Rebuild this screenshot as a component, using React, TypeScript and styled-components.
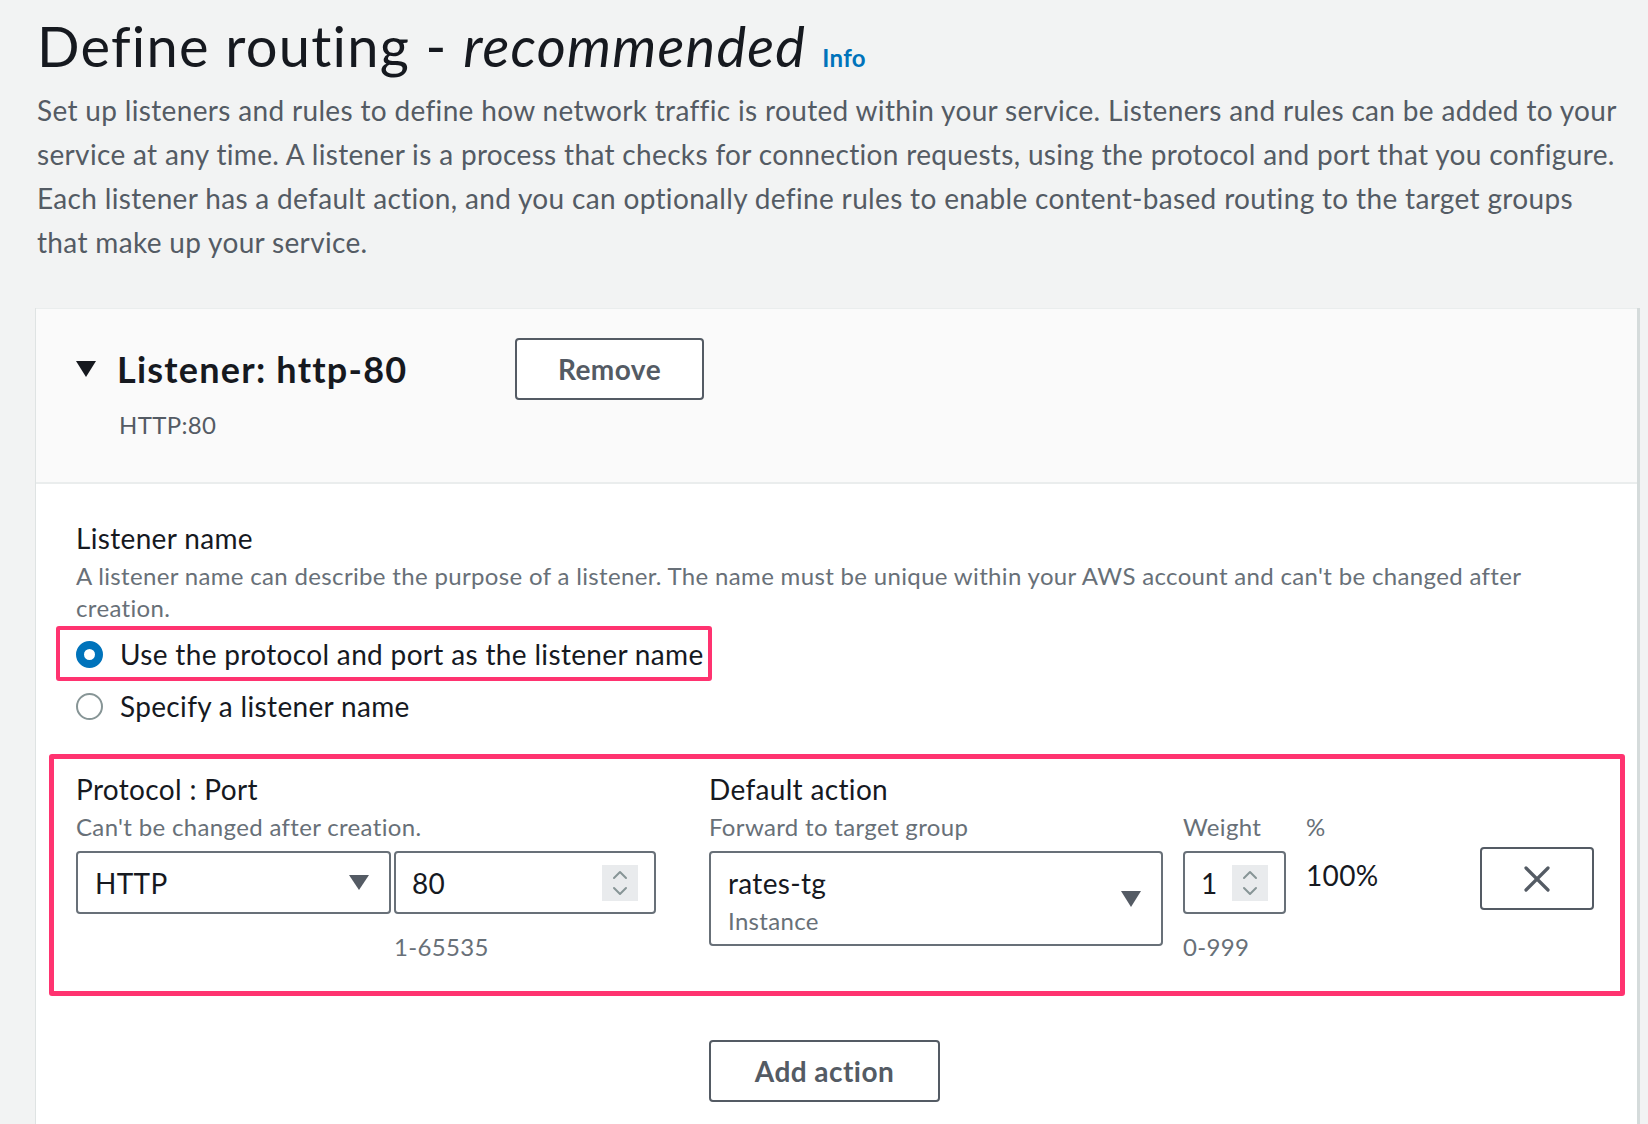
import React from "react";
import styled, { createGlobalStyle } from "styled-components";

const GlobalStyle = createGlobalStyle`
  html, body { margin: 0; padding: 0; }
  body {
    background: #f2f3f3;
    font-family: Lato, "Open Sans", "Liberation Sans", sans-serif;
    color: #16191f;
    letter-spacing: 0.021em;
    -webkit-font-smoothing: antialiased;
  }
  * { box-sizing: border-box; }
`;

const Page = styled.div`
  padding: 14px 11px 0 36px;
  width: 1648px;
  height: 1124px;
  overflow: hidden;
`;

const TitleRow = styled.div`
  display: flex;
  align-items: baseline;
  gap: 16px;
  padding-left: 1px;
`;

const H1 = styled.h1`
  margin: 0;
  font-size: 56px;
  line-height: 64px;
  font-weight: 400;
  letter-spacing: 0.022em;
  color: #16191f;
  em { font-style: italic; }
`;

const InfoLink = styled.a`
  font-size: 24px;
  font-weight: 700;
  color: #0073bb;
  text-decoration: none;
`;

const Intro = styled.p`
  margin: 10px 0 0 1px;
  font-size: 28px;
  line-height: 44px;
  color: #545b64;
  white-space: nowrap;
`;

const Card = styled.section`
  margin-top: 44px;
  background: #ffffff;
  border-top: 1px solid #eaeded;
  box-shadow: 3px 0 0 #d5dbdb, -1px 0 0 #dfe3e3;
  height: 900px;
`;

const CardHeader = styled.header`
  background: #fafafa;
  border-bottom: 2px solid #eaeded;
  padding: 29px 40px 41px;
`;

const HeaderRow = styled.div`
  display: flex;
  align-items: center;
`;

const TitleGroup = styled.div`
  width: 439px;
  display: flex;
  align-items: center;
  gap: 21px;
`;

const Caret = styled.span<{ $size: number }>`
  display: inline-block;
  width: 0;
  height: 0;
  border-left: ${(p) => p.$size / 2}px solid transparent;
  border-right: ${(p) => p.$size / 2}px solid transparent;
  border-top: ${(p) => Math.round(p.$size * 0.75)}px solid currentColor;
`;

const Toggle = styled.span`
  color: #16191f;
  display: flex;
`;

const H2 = styled.h2`
  margin: 0;
  font-size: 36px;
  line-height: 44px;
  font-weight: 700;
  letter-spacing: 0.034em;
  color: #16191f;
`;

const Button = styled.button<{ $w: number }>`
  width: ${(p) => p.$w}px;
  height: 62px;
  background: #ffffff;
  border: 2px solid #545b64;
  border-radius: 4px;
  font-family: inherit;
  font-size: 28px;
  font-weight: 700;
  letter-spacing: 0.016em;
  color: #545b64;
  display: flex;
  align-items: center;
  justify-content: center;
  padding: 0;
`;

const SubText = styled.div`
  margin-top: 9px;
  padding-left: 43px;
  font-size: 24px;
  line-height: 32px;
  color: #545b64;
`;

const CardBody = styled.div`
  padding: 32px 40px 0;
`;

const Label = styled.div`
  font-size: 28px;
  line-height: 44px;
  color: #16191f;
`;

const Desc = styled.div`
  font-size: 24px;
  line-height: 32px;
  color: #687078;
  white-space: nowrap;
`;

const Highlight = styled.div`
  border: 4px solid #ff3370;
  border-radius: 3px;
`;

const RadioHighlight = styled(Highlight)`
  display: inline-flex;
  margin: 2px 0 0 -20px;
  padding: 2px 4px 1px 16px;
`;

const RadioRow = styled.label`
  display: flex;
  align-items: center;
  gap: 17px;
  font-size: 28px;
  line-height: 44px;
  color: #16191f;
`;

const PlainRadioRow = styled(RadioRow)`
  margin-top: 3px;
`;

const RadioDot = styled.span<{ $checked?: boolean }>`
  width: 27px;
  height: 27px;
  border-radius: 50%;
  flex: 0 0 auto;
  background: #ffffff;
  border: ${(p) => (p.$checked ? "8.5px solid #0073bb" : "2px solid #879596")};
`;

const ActionsBox = styled(Highlight)`
  margin: 26px -28px 0 -27px;
  border-width: 5px;
  padding: 8px 26px 28px 22px;
`;

const Grid = styled.div`
  display: grid;
  grid-template-columns: 580px 1fr;
  column-gap: 53px;
`;

const Controls = styled.div`
  display: flex;
  gap: 3px;
  margin-top: 8px;
`;

const FieldBox = styled.div<{ $w: number; $h?: number }>`
  width: ${(p) => p.$w}px;
  height: ${(p) => p.$h ?? 63}px;
  border: 2px solid #687078;
  border-radius: 4px;
  background: #ffffff;
  display: flex;
  align-items: center;
  justify-content: space-between;
  padding: 0 20px 0 17px;
  font-size: 28px;
  color: #16191f;
`;

const NumberBox = styled(FieldBox)`
  padding: 0 16px 0 16px;
`;

const Spinner = styled.span`
  width: 36px;
  height: 36px;
  background: #e9ebed;
  display: flex;
  flex-direction: column;
  align-items: center;
  justify-content: center;
`;

const Hint = styled.div<{ $indent?: number }>`
  margin-top: 17px;
  padding-left: ${(p) => p.$indent ?? 0}px;
  font-size: 24px;
  line-height: 32px;
  color: #687078;
`;

const ActionRow = styled.div`
  display: flex;
  align-items: flex-start;
`;

const Field = styled.div<{ $gapAfter: number }>`
  margin-right: ${(p) => p.$gapAfter}px;
`;

const Controls2 = styled.div`
  margin-top: 8px;
`;

const TwoLine = styled.div`
  align-self: flex-start;
  padding-top: 10px;
  display: flex;
  flex-direction: column;
`;

const Primary = styled.span`
  font-size: 28px;
  line-height: 40px;
  color: #16191f;
`;

const Secondary = styled.span`
  font-size: 24px;
  line-height: 36px;
  color: #687078;
`;

const Percent = styled.div`
  margin-top: 10px;
  font-size: 28px;
  line-height: 44px;
  color: #16191f;
`;

const RemoveCol = styled.div`
  margin-left: auto;
  padding-top: 36px;
`;

const IconButton = styled(Button)`
  height: 63px;
`;

const AddRow = styled(Grid)`
  margin-top: 44px;
`;

const Chevrons = () => (
  <svg width="16" height="26" viewBox="0 0 16 26" fill="none" stroke="#879596" strokeWidth="2" strokeLinecap="round" strokeLinejoin="round">
    <path d="M2 8 L8 2 L14 8" />
    <path d="M2 18 L8 24 L14 18" />
  </svg>
);

const CloseIcon = () => (
  <svg width="26" height="26" viewBox="0 0 26 26" fill="none" stroke="#545b64" strokeWidth="3.2" strokeLinecap="round">
    <path d="M2 2 L24 24" />
    <path d="M24 2 L2 24" />
  </svg>
);

const SelectCaret = styled.span`
  color: #545b64;
  display: flex;
`;

export default function App() {
  return (
    <>
      <GlobalStyle />
      <Page>
        <TitleRow>
          <H1>
            Define routing - <em>recommended</em>
          </H1>
          <InfoLink>Info</InfoLink>
        </TitleRow>
        <Intro>
          Set up listeners and rules to define how network traffic is routed within your service. Listeners and rules can be added to your
          <br />
          service at any time. A listener is a process that checks for connection requests, using the protocol and port that you configure.
          <br />
          Each listener has a default action, and you can optionally define rules to enable content-based routing to the target groups
          <br />
          that make up your service.
        </Intro>

        <Card>
          <CardHeader>
            <HeaderRow>
              <TitleGroup>
                <Toggle>
                  <Caret $size={21} />
                </Toggle>
                <H2>Listener: http-80</H2>
              </TitleGroup>
              <Button $w={189}>Remove</Button>
            </HeaderRow>
            <SubText>HTTP:80</SubText>
          </CardHeader>

          <CardBody>
            <Label>Listener name</Label>
            <Desc>
              A listener name can describe the purpose of a listener. The name must be unique within your AWS account and can't be changed after
              <br />
              creation.
            </Desc>
            <RadioHighlight>
              <RadioRow>
                <RadioDot $checked />
                Use the protocol and port as the listener name
              </RadioRow>
            </RadioHighlight>
            <PlainRadioRow>
              <RadioDot />
              Specify a listener name
            </PlainRadioRow>

            <ActionsBox>
              <Grid>
                <div>
                  <Label>Protocol : Port</Label>
                  <Desc>Can't be changed after creation.</Desc>
                  <Controls>
                    <FieldBox $w={315}>
                      HTTP
                      <SelectCaret>
                        <Caret $size={20} />
                      </SelectCaret>
                    </FieldBox>
                    <NumberBox $w={262}>
                      80
                      <Spinner>
                        <Chevrons />
                      </Spinner>
                    </NumberBox>
                  </Controls>
                  <Hint $indent={318}>1-65535</Hint>
                </div>
                <div>
                  <Label>Default action</Label>
                  <ActionRow>
                    <Field $gapAfter={20}>
                      <Desc>Forward to target group</Desc>
                      <Controls2>
                        <FieldBox $w={454} $h={95}>
                          <TwoLine>
                            <Primary>rates-tg</Primary>
                            <Secondary>Instance</Secondary>
                          </TwoLine>
                          <SelectCaret>
                            <Caret $size={21} />
                          </SelectCaret>
                        </FieldBox>
                      </Controls2>
                    </Field>
                    <Field $gapAfter={20}>
                      <Desc>Weight</Desc>
                      <Controls2>
                        <NumberBox $w={103}>
                          1
                          <Spinner>
                            <Chevrons />
                          </Spinner>
                        </NumberBox>
                      </Controls2>
                      <Hint>0-999</Hint>
                    </Field>
                    <Field $gapAfter={0}>
                      <Desc>%</Desc>
                      <Percent>100%</Percent>
                    </Field>
                    <RemoveCol>
                      <IconButton $w={114}>
                        <CloseIcon />
                      </IconButton>
                    </RemoveCol>
                  </ActionRow>
                </div>
              </Grid>
            </ActionsBox>

            <AddRow>
              <div />
              <div>
                <Button $w={231}>Add action</Button>
              </div>
            </AddRow>
          </CardBody>
        </Card>
      </Page>
    </>
  );
}
